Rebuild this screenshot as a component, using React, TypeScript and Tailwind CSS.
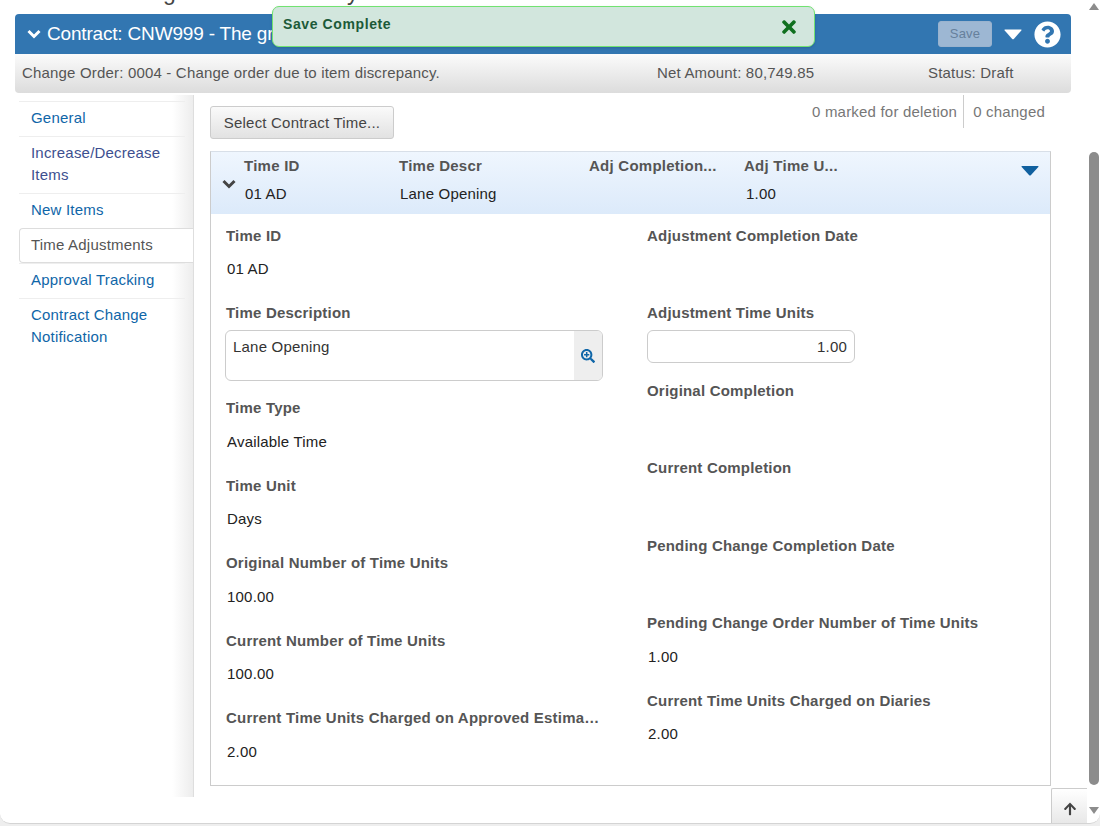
import { FaArrowUp, FaQuestionCircle, FaSearchPlus, FaTimes } from 'react-icons/fa'

const FONT = "font-['Liberation_Sans',Arial,sans-serif]"

const NAV = [
  { label: 'General' },
  { label: 'Increase/Decrease Items', color: 'text-[#3d4f8f]' },
  { label: 'New Items' },
  { label: 'Time Adjustments', active: true },
  { label: 'Approval Tracking' },
  { label: 'Contract Change Notification' },
]

const COLS = [
  { label: 'Time ID', value: '01 AD', width: 'w-[155px]', indent: 'pl-[1px]' },
  { label: 'Time Descr', value: 'Lane Opening', width: 'w-[190px]', indent: 'pl-[1px]' },
  { label: 'Adj Completion...', value: '', width: 'w-[155px]', indent: 'pl-[1px]' },
  { label: 'Adj Time U...', value: '1.00', width: 'w-[120px]', indent: 'pl-[2px]' },
]

function Chevron({ className }: { className: string }) {
  return (
    <svg viewBox="0 0 14 10" className={className} fill="none" stroke="currentColor" strokeWidth="3">
      <polyline points="1.5,2 7,7.5 12.5,2" />
    </svg>
  )
}

function Field({ label, value }: { label: string; value?: string }) {
  return (
    <div className="h-[77.5px]">
      <div className="h-[20px] truncate text-[15px] font-bold leading-[20px] tracking-[0.2px] text-[#555]">{label}</div>
      {value && <div className="mt-[13.4px] pl-[1px] text-[15px] leading-[20px] tracking-[0.2px] text-[#222]">{value}</div>}
    </div>
  )
}

export default function App() {
  return (
    <div className={`h-[826px] w-[1100px] overflow-hidden bg-[#eeeeee] ${FONT}`}>
      <div className="relative flex h-[824px] w-[1100px] overflow-hidden rounded-b-[10px] border-b border-[#d4d4d4] bg-white">
        {/* Page */}
        <div className="w-[1087px] shrink-0">
          <div className="h-[14px] overflow-hidden">
            <div className="mt-[-20px] pl-[108px] text-[23px] leading-[24px] text-[#444]">Change Order Summary</div>
          </div>

          {/* Header */}
          <div className="ml-[15px] w-[1056px]">
            <div className="flex h-[40px] items-center rounded-t-[4px] bg-[#3276b1] pl-[12px] pr-[10px] text-white">
              <Chevron className="mr-[6px] h-[10px] w-[14px]" />
              <span className="text-[19px] leading-[24px] tracking-[-0.18px]">Contract: CNW999 - The gr</span>
              <button className="ml-auto h-[26px] w-[54px] rounded-[3px] border border-[#9ab3ce] bg-[#9db7d3] text-[13px] tracking-[0.2px] text-[#66809c]">
                Save
              </button>
              <svg viewBox="0 0 18 11" className="ml-[12px] h-[11px] w-[18px] text-white" fill="currentColor">
                <path d="M1 0.5H17Q18 0.5 17.3 1.4L10 9.8Q9 10.8 8 9.8L0.7 1.4Q0 0.5 1 0.5Z" />
              </svg>
              <FaQuestionCircle className="ml-[12px] h-[27px] w-[27px]" />
            </div>
            <div className="flex h-[39px] items-center rounded-b-[4px] bg-gradient-to-b from-[#fbfbfb] to-[#dcdcdc] pl-[7px] text-[15px] tracking-[0.18px] text-[#555]">
              <span className="w-[635px]">Change Order: 0004 - Change order due to item discrepancy.</span>
              <span className="w-[271px]">Net Amount: 80,749.85</span>
              <span>Status: Draft</span>
            </div>
          </div>

          {/* Body */}
          <div className="mt-[2px] flex">
            {/* Side nav */}
            <nav className="ml-[19px] h-[702px] w-[175px] shrink-0 border-r border-[#dedede] bg-gradient-to-r from-white from-[88%] to-[#ededed] pt-[6px]">
              {NAV.map((item) =>
                item.active ? (
                  <div
                    key={item.label}
                    className="flex h-[35px] items-center rounded-l-[4px] border border-r-0 border-[#dddddd] bg-white pl-[11px] text-[15px] tracking-[0.2px] text-[#555]"
                  >
                    {item.label}
                  </div>
                ) : (
                  <div
                    key={item.label}
                    className={`mr-[8px] border-t border-[#eeeeee] pb-[7px] pl-[12px] pr-[10px] pt-[5px] text-[15px] leading-[22px] tracking-[0.2px] ${item.color ?? 'text-[#0f66a8]'}`}
                  >
                    {item.label}
                  </div>
                ),
              )}
            </nav>

            {/* Content */}
            <div className="ml-[16px] w-[841px] shrink-0">
              <div className="flex h-[56px] items-start justify-between">
                <button className="mt-[11px] h-[33px] w-[184px] rounded-[3px] border border-[#cccccc] bg-gradient-to-b from-[#fafafa] to-[#e2e2e2] pt-[1px] text-[15px] tracking-[0.2px] text-[#444]">
                  Select Contract Time...
                </button>
                <div className="mr-[6px] flex h-[33px] items-center text-[15px] tracking-[0.2px] text-[#777]">
                  <span className="pr-[6px] pt-[2px]">0 marked for deletion</span>
                  <span className="h-[33px] border-l border-[#cccccc] pl-[9px] leading-[33px]">0 changed</span>
                </div>
              </div>

              <div className="h-[635px] border border-[#cccccc] border-t-[#d8dfe8]">
                {/* Row header */}
                <div className="flex h-[62px] items-center bg-gradient-to-b from-[#eff6fe] to-[#dceafa] pl-[11px] pr-[11px]">
                  <Chevron className="mr-[8px] mt-[1px] h-[10px] w-[14px] text-[#444]" />
                  {COLS.map((col) => (
                    <div key={col.label} className={`mb-[6px] ${col.width}`}>
                      <div className="text-[15px] font-bold leading-[20px] tracking-[0.25px] text-[#555]">{col.label}</div>
                      <div className={`mt-[8px] h-[20px] text-[15px] leading-[20px] tracking-[0.2px] text-[#222] ${col.indent}`}>{col.value}</div>
                    </div>
                  ))}
                  <svg viewBox="0 0 18 10" className="mb-[24px] ml-auto h-[10px] w-[18px] text-[#10609f]" fill="currentColor">
                    <path d="M1 0H17Q18 0 17.3 1L10 9Q9 10 8 9L0.7 1Q0 0 1 0Z" />
                  </svg>
                </div>

                {/* Form */}
                <div className="flex pl-[15px] pt-[11.7px]">
                  <div className="w-[421px] shrink-0">
                    <div className="w-[374px]">
                      <Field label="Time ID" value="01 AD" />
                      <div className="h-[95px]">
                        <div className="text-[15px] font-bold leading-[20px] tracking-[0.2px] text-[#555]">Time Description</div>
                        <div className="ml-[-1px] mt-[7px] flex h-[51px] w-[378px] overflow-hidden rounded-[6px] border border-[#cccccc]">
                          <div className="flex-1 px-[7px] py-[6px] text-[15px] leading-[20px] tracking-[0.2px] text-[#333]">Lane Opening</div>
                          <div className="flex w-[28px] items-center justify-center bg-[#eeeeee] text-[#0f66a8]">
                            <FaSearchPlus className="h-[14px] w-[14px]" />
                          </div>
                        </div>
                      </div>
                      <Field label="Time Type" value="Available Time" />
                      <Field label="Time Unit" value="Days" />
                      <Field label="Original Number of Time Units" value="100.00" />
                      <Field label="Current Number of Time Units" value="100.00" />
                      <Field label="Current Time Units Charged on Approved Estimates" value="2.00" />
                    </div>
                  </div>
                  <div className="w-[390px]">
                    <Field label="Adjustment Completion Date" />
                    <div className="h-[77.5px]">
                      <div className="text-[15px] font-bold leading-[20px] tracking-[0.2px] text-[#555]">Adjustment Time Units</div>
                      <div className="mt-[7px] h-[33px] w-[208px] rounded-[6px] border border-[#cccccc] pr-[7px] text-right text-[15px] leading-[31px] tracking-[0.2px] text-[#333]">1.00</div>
                    </div>
                    <Field label="Original Completion" />
                    <Field label="Current Completion" />
                    <Field label="Pending Change Completion Date" />
                    <Field label="Pending Change Order Number of Time Units" value="1.00" />
                    <Field label="Current Time Units Charged on Diaries" value="2.00" />
                  </div>
                </div>
              </div>
            </div>
          </div>
        </div>

        {/* Scrollbar */}
        <div className="ml-[1px] flex w-[12px] flex-col items-center">
          <svg viewBox="0 0 10 7" className="mt-[3px] h-[7px] w-[10px] text-[#8c8c8c]" fill="currentColor">
            <polygon points="5,0 10,7 0,7" />
          </svg>
          <div className="mt-[142px] h-[633px] w-[10px] rounded-[5px] bg-[#8c8c8c]" />
          <svg viewBox="0 0 10 7" className="mt-[22px] h-[7px] w-[10px] text-[#8c8c8c]" fill="currentColor">
            <polygon points="0,0 10,0 5,7" />
          </svg>
        </div>

        {/* Toast */}
        <div className="absolute left-[272px] top-[6px] flex h-[41px] w-[543px] rounded-[7px] border border-[#71e271] bg-[#d2e6dd] pl-[10px] pr-[18px] pt-[8px] shadow-sm">
          <span className="text-[14px] font-bold leading-[18px] tracking-[0.6px] text-[#1c5a38]">Save Complete</span>
          <FaTimes className="ml-auto mt-[2px] h-[20px] w-[14px] text-[#10701f]" />
        </div>

        {/* Back to top */}
        <div className="absolute left-[1051px] top-[788px] flex h-[35px] w-[36px] items-center justify-center rounded-tl-[2px] border-l border-t border-[#cccccc] bg-gradient-to-b from-white to-[#e8e8e8] pt-[6px] text-[#444]">
          <FaArrowUp className="h-[14px] w-[14px]" />
        </div>
      </div>
    </div>
  )
}
